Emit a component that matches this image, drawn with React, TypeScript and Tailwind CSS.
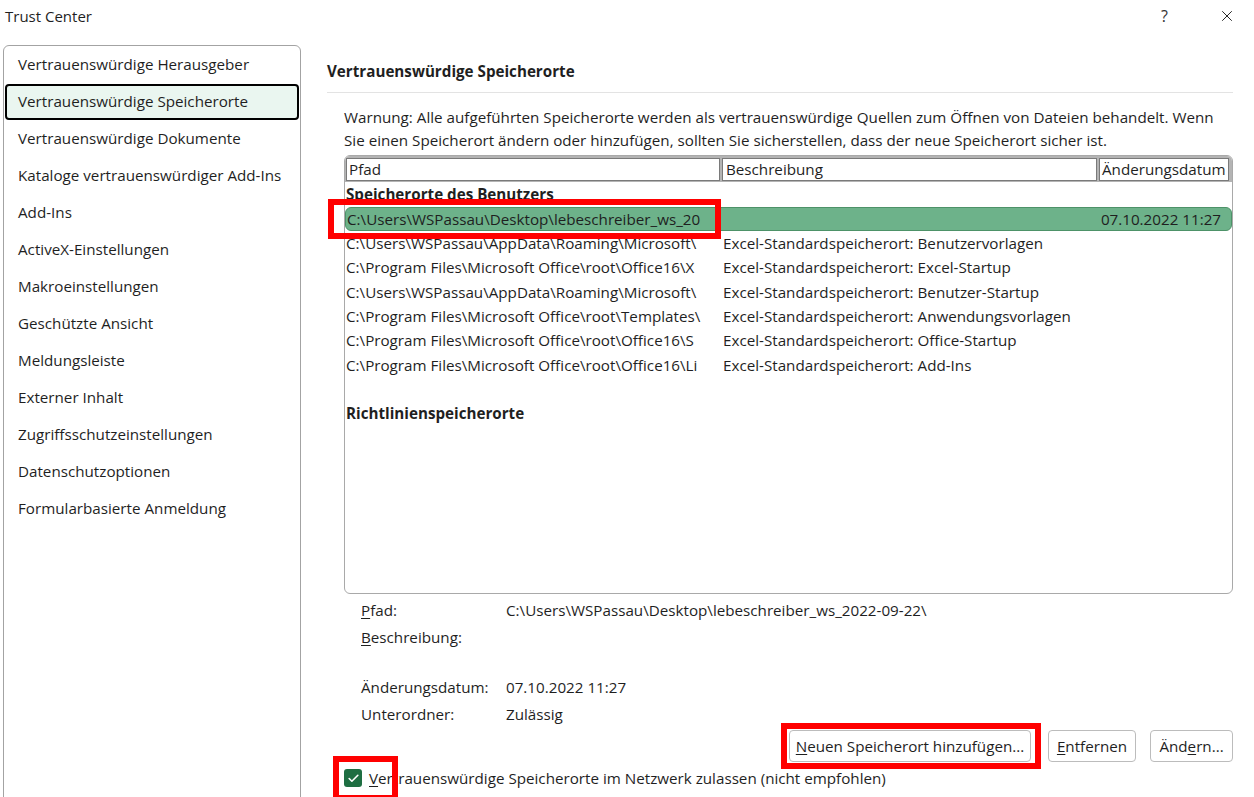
import { Check, X } from "lucide-react";

const navItems = [
  "Vertrauenswürdige Herausgeber",
  "Vertrauenswürdige Speicherorte",
  "Vertrauenswürdige Dokumente",
  "Kataloge vertrauenswürdiger Add-Ins",
  "Add-Ins",
  "ActiveX-Einstellungen",
  "Makroeinstellungen",
  "Geschützte Ansicht",
  "Meldungsleiste",
  "Externer Inhalt",
  "Zugriffsschutzeinstellungen",
  "Datenschutzoptionen",
  "Formularbasierte Anmeldung",
];

const rows = [
  { path: "C:\\Users\\WSPassau\\AppData\\Roaming\\Microsoft\\", desc: "Excel-Standardspeicherort: Benutzervorlagen" },
  { path: "C:\\Program Files\\Microsoft Office\\root\\Office16\\X", desc: "Excel-Standardspeicherort: Excel-Startup" },
  { path: "C:\\Users\\WSPassau\\AppData\\Roaming\\Microsoft\\", desc: "Excel-Standardspeicherort: Benutzer-Startup" },
  { path: "C:\\Program Files\\Microsoft Office\\root\\Templates\\", desc: "Excel-Standardspeicherort: Anwendungsvorlagen" },
  { path: "C:\\Program Files\\Microsoft Office\\root\\Office16\\S", desc: "Excel-Standardspeicherort: Office-Startup" },
  { path: "C:\\Program Files\\Microsoft Office\\root\\Office16\\Li", desc: "Excel-Standardspeicherort: Add-Ins" },
];

export default function App() {
  return (
    <div className="relative w-[1254px] h-[797px] overflow-hidden bg-white text-[#1f1f1f] font-['Open_Sans',sans-serif] text-[15.2px]">
      {/* title bar */}
      <div className="h-[32px] flex items-center justify-between">
        <span className="pl-[5px] text-[15px]">Trust Center</span>
        <div className="flex items-center gap-[50px] pr-[18px]">
          <span className="text-[16px] text-[#333]">?</span>
          <X className="w-[18px] h-[18px] text-[#222]" strokeWidth={1.3} />
        </div>
      </div>

      <div className="flex mt-[13px]">
        {/* left nav */}
        <div className="ml-[3px] w-[298px] h-[760px] border border-[#a3a3a3] rounded-t-[6px] p-[1px] pt-0">
          {navItems.map((item, i) =>
            i === 1 ? (
              <div
                key={item}
                className="h-[36px] my-[0.5px] flex items-center pl-[11px] border-2 border-black rounded-[4px] bg-[#eaf6f0]"
              >
                {item}
              </div>
            ) : (
              <div key={item} className="h-[37px] flex items-center pl-[13px]">
                {item}
              </div>
            )
          )}
        </div>

        {/* right content */}
        <div className="ml-[26px] w-[906px] flex flex-col">
          <div className="h-[48px] pt-[15px] border-b border-[#e3e3e3] font-bold">
            Vertrauenswürdige Speicherorte
          </div>
          <div className="pl-[17px] pt-[13px] leading-[23px]">
            Warnung: Alle aufgeführten Speicherorte werden als vertrauenswürdige Quellen zum Öffnen von Dateien behandelt. Wenn
            <br />
            Sie einen Speicherort ändern oder hinzufügen, sollten Sie sicherstellen, dass der neue Speicherort sicher ist.
          </div>

          {/* list box */}
          <div className="ml-[17px] mt-[3px] w-[889px] h-[439px] border border-[#a9a9a9] rounded-[6px] overflow-hidden">
            <div className="flex gap-[2px] bg-[#b4b4b4] pt-[2px] pl-[1px] pr-[3px] pb-[1px] h-[26px]">
              <div className="w-[374px] bg-white border border-[#7a7a7a] flex items-center pl-[2px] leading-none">Pfad</div>
              <div className="w-[375px] bg-white border border-[#7a7a7a] flex items-center pl-[3px] leading-none">Beschreibung</div>
              <div className="w-[130px] bg-white border border-[#7a7a7a] flex items-center pl-[2px] leading-none overflow-hidden whitespace-nowrap">Änderungsdatum</div>
            </div>
            <div className="h-[25px] flex items-center pl-[1px] font-bold">Speicherorte des Benutzers</div>
            <div className="h-[24px] flex items-center justify-between bg-[#6db28a] border border-[#4d9268] rounded-[6px] pl-[1px] pr-[10px]">
              <span>C:\Users\WSPassau\Desktop\lebeschreiber_ws_20</span>
              <span>07.10.2022 11:27</span>
            </div>
            {rows.map((r, i) => (
              <div key={i} className="h-[24.4px] flex items-center">
                <div className="w-[377px] pl-[1px] whitespace-nowrap overflow-hidden">{r.path}</div>
                <div className="pl-[1px] whitespace-nowrap">{r.desc}</div>
              </div>
            ))}
            <div className="h-[24px]" />
            <div className="h-[24px] flex items-center pl-[1px] font-bold">Richtlinienspeicherorte</div>
          </div>

          {/* details */}
          <div className="ml-[34px] mt-[3px] grid grid-cols-[145px_1fr] grid-rows-[27px_27px_23px_27px_27px] items-center">
            <span><span className="underline underline-offset-2">P</span>fad:</span>
            <span>C:\Users\WSPassau\Desktop\lebeschreiber_ws_2022-09-22\</span>
            <span><span className="underline underline-offset-2">B</span>eschreibung:</span>
            <span />
            <span />
            <span />
            <span>Änderungsdatum:</span>
            <span>07.10.2022 11:27</span>
            <span>Unterordner:</span>
            <span>Zulässig</span>
          </div>

          <div className="flex justify-end mt-[2px]">
            <button className="h-[32px] w-[242px] rounded-[4px] border border-[#bcbcbc] bg-white">
              <span className="underline underline-offset-2">N</span>euen Speicherort hinzufügen...
            </button>
            <button className="ml-[17px] h-[32px] w-[88px] rounded-[4px] border border-[#bcbcbc] bg-white">
              <span className="underline underline-offset-2">E</span>ntfernen
            </button>
            <button className="ml-[14px] h-[32px] w-[83px] rounded-[4px] border border-[#bcbcbc] bg-white">
              Änd<span className="underline underline-offset-2">e</span>rn...
            </button>
          </div>

          <div className="ml-[17px] mt-[5px] flex items-center gap-[7px]">
            <div className="w-[18px] h-[18px] rounded-[3px] bg-[#1e6e42] flex items-center justify-center">
              <Check className="w-[13px] h-[13px] text-white" strokeWidth={3} />
            </div>
            <span>
              <span className="underline underline-offset-2">V</span>ertrauenswürdige Speicherorte im Netzwerk zulassen (nicht empfohlen)
            </span>
          </div>
        </div>
      </div>

      {/* red annotation boxes */}
      <div className="absolute left-[328px] top-[199px] w-[393px] h-[40px] border-[6px] border-[#ff0000]" />
      <div className="absolute left-[781px] top-[723px] w-[260px] h-[46px] border-[6px] border-[#ff0000]" />
      <div className="absolute left-[333px] top-[756px] w-[65px] h-[45px] border-[6px] border-[#ff0000]" />
    </div>
  );
}
